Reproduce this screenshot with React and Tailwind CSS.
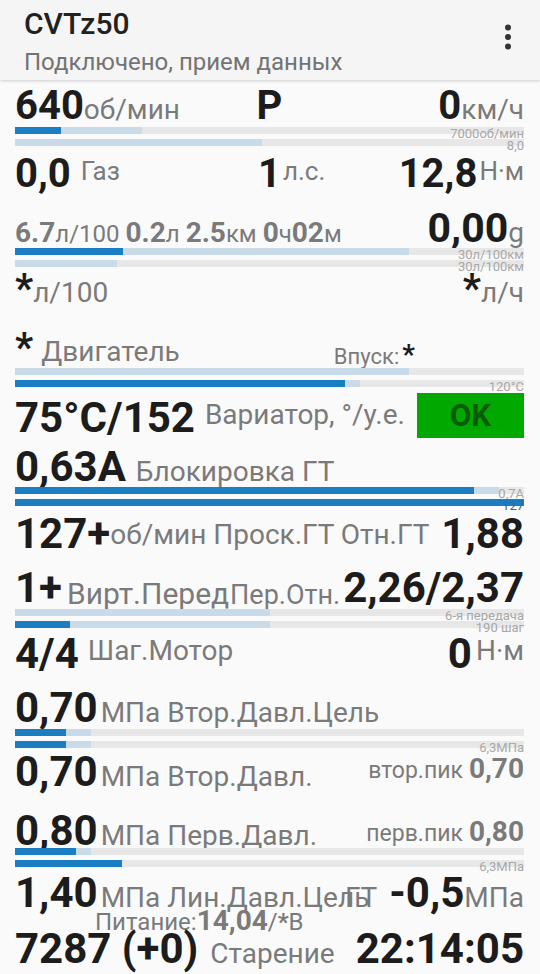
import React from "react";

const VAL = "font-bold text-[#1c1c1c]";
const GR = "text-[#7a7a7a]";
const CELL = "col-start-1 row-start-1";

function Bar({ p = 0, s = 0, label, labelCls = "text-[#a8a8a8]" }) {
  return (
    <div className="relative h-[7px] bg-[#e7e7e7]">
      {s > 0 && <div className="absolute inset-y-0 left-0 bg-[#c9dbe9]" style={{ width: s }} />}
      {p > 0 && <div className="absolute inset-y-0 left-0 bg-[#1b7dc2]" style={{ width: p }} />}
      {label && (
        <span className={`absolute right-0 top-0 text-[13px] leading-[13px] whitespace-nowrap ${labelCls}`}>
          {label}
        </span>
      )}
    </div>
  );
}

function Bars({ a, b, className = "" }) {
  return (
    <div className={`flex flex-col gap-[5px] h-[19px] ${className}`}>
      <Bar {...a} />
      <Bar {...b} />
    </div>
  );
}

function Dots() {
  return (
    <svg width="8" height="26" viewBox="0 0 8 26" className="fill-[#333]">
      <circle cx="4" cy="3.5" r="3" />
      <circle cx="4" cy="13" r="3" />
      <circle cx="4" cy="22.5" r="3" />
    </svg>
  );
}

export default function App() {
  return (
    <div className="w-[540px] h-[974px] overflow-hidden bg-[#fafafa] font-['Roboto','Noto_Sans',sans-serif] whitespace-nowrap">
      {/* Header */}
      <div className="relative h-[80px] bg-[#f5f5f5] shadow-[0_1px_3px_rgba(0,0,0,0.18)] flex items-start justify-between pl-[24px] pr-[28px]">
        <div className="flex flex-col">
          <div className="mt-[9px] text-[30px] leading-[30px] font-medium text-[#212121]">CVTz50</div>
          <div className="mt-[11px] text-[24px] leading-[24px] text-[#737373]">Подключено, прием данных</div>
        </div>
        <div className="mt-[24px]">
          <Dots />
        </div>
      </div>

      <div className="pl-[15px] pr-[16px]">
        {/* R1 */}
        <div className="grid h-[41px] mt-[6px] leading-none">
          <div className={`${CELL} flex items-baseline`}>
            <span className={`text-[40px] ${VAL}`}>640</span>
            <span className={`text-[28px] ${GR}`}>об/мин</span>
          </div>
          <div className={`${CELL} justify-self-center text-[40px] ${VAL}`}>P</div>
          <div className={`${CELL} justify-self-end flex items-baseline`}>
            <span className={`text-[40px] ${VAL}`}>0</span>
            <span className={`text-[28px] ${GR}`}>км/ч</span>
          </div>
        </div>
        <Bars a={{ p: 46, s: 127, label: "7000об/мин" }} b={{ s: 247, label: "8,0" }} />

        {/* R2 */}
        <div className="grid h-[42px] mt-[8px] leading-none">
          <div className={`${CELL} flex items-start`}>
            <span className={`text-[40px] ${VAL}`}>0,0</span>
            <span className={`text-[26px] ml-[10px] mt-[4px] ${GR}`}>Газ</span>
          </div>
          <div className={`${CELL} justify-self-start ml-[243px] flex items-start`}>
            <span className={`text-[40px] ${VAL}`}>1</span>
            <span className={`text-[26px] ml-[2px] mt-[4px] ${GR}`}>л.с.</span>
          </div>
          <div className={`${CELL} justify-self-end flex items-start`}>
            <span className={`text-[40px] ${VAL}`}>12,8</span>
            <span className={`text-[26px] ml-[2px] mt-[4px] ${GR}`}>Н·м</span>
          </div>
        </div>

        {/* R3 */}
        <div className="grid h-[40px] mt-[12px] leading-none">
          <div className={`${CELL} self-start mt-[11px] flex items-baseline text-[#7a7a7a]`}>
            <span className="text-[28px] font-bold">6.7</span>
            <span className="text-[24px]">л/100</span>
            <span className="text-[28px] font-bold ml-[6px]">0.2</span>
            <span className="text-[24px]">л</span>
            <span className="text-[28px] font-bold ml-[6px]">2.5</span>
            <span className="text-[24px]">км</span>
            <span className="text-[28px] font-bold ml-[6px]">0</span>
            <span className="text-[24px]">ч</span>
            <span className="text-[28px] font-bold">02</span>
            <span className="text-[24px]">м</span>
          </div>
          <div className={`${CELL} justify-self-end flex items-baseline`}>
            <span className={`text-[41px] ${VAL}`}>0,00</span>
            <span className={`text-[28px] ${GR}`}>g</span>
          </div>
        </div>
        <Bars a={{ p: 108, s: 394, label: "30л/100км" }} b={{ s: 102, label: "30л/100км" }} />

        {/* R4 */}
        <div className="grid h-[40px] mt-[2px] leading-none">
          <div className={`${CELL} flex items-baseline`}>
            <span className={`text-[40px] ${VAL}`}>*</span>
            <span className={`text-[28px] ${GR}`}>л/100</span>
          </div>
          <div className={`${CELL} justify-self-end flex items-baseline`}>
            <span className={`text-[40px] ${VAL}`}>*</span>
            <span className={`text-[28px] ${GR}`}>л/ч</span>
          </div>
        </div>

        {/* R5 */}
        <div className="grid h-[40px] mt-[19px] leading-none">
          <div className={`${CELL} flex items-baseline`}>
            <span className={`text-[40px] ${VAL}`}>*</span>
            <span className={`text-[28px] ml-[8px] ${GR}`}>Двигатель</span>
          </div>
          <div className={`${CELL} justify-self-end mr-[109px] flex items-baseline self-start mt-[13px]`}>
            <span className={`text-[22px] ${GR}`}>Впуск:</span>
            <span className={`text-[28px] ml-[3px] ${VAL}`}>*</span>
          </div>
        </div>
        <Bars a={{ s: 394 }} b={{ p: 330, s: 345, label: "120°C" }} />

        {/* R6 */}
        <div className="grid h-[42px] mt-[10px] leading-none">
          <div className={`${CELL} flex items-start`}>
            <span className={`text-[42px] ${VAL}`}>75°C/152</span>
            <span className={`text-[28px] ml-[10px] mt-[4px] ${GR}`}>Вариатор, °/у.е.</span>
          </div>
          <div className={`${CELL} justify-self-end self-start mt-[-4px] w-[107px] h-[45px] bg-[#00a800] flex items-center justify-center`}>
            <span className="text-[31px] font-bold text-[#0a5c0a]">OK</span>
          </div>
        </div>

        {/* R7 */}
        <div className="grid h-[41px] mt-[7px] leading-none">
          <div className={`${CELL} flex items-baseline`}>
            <span className={`text-[42px] ${VAL}`}>0,63A</span>
            <span className={`text-[28px] ml-[10px] ${GR}`}>Блокировка ГТ</span>
          </div>
        </div>
        <Bars
          a={{ p: 459, s: 484, label: "0,7A" }}
          b={{ p: 509, label: "127", labelCls: "text-[#2a6ea3]" }}
        />

        {/* R8 */}
        <div className="grid h-[42px] mt-[7px] leading-none">
          <div className={`${CELL} flex items-start`}>
            <span className={`text-[42px] ${VAL}`}>127+</span>
            <span className={`text-[28px] mt-[8px] ${GR}`}>об/мин Проск.ГТ</span>
          </div>
          <div className={`${CELL} justify-self-end flex items-start`}>
            <span className={`text-[28px] mt-[8px] ${GR}`}>Отн.ГТ</span>
            <span className={`text-[42px] ml-[12px] ${VAL}`}>1,88</span>
          </div>
        </div>

        {/* R9 */}
        <div className="grid h-[42px] mt-[12px] leading-none">
          <div className={`${CELL} flex items-start`}>
            <span className={`text-[42px] ${VAL}`}>1+</span>
            <span className={`text-[30px] ml-[5px] mt-[12px] ${GR}`}>Вирт.Перед</span>
          </div>
          <div className={`${CELL} justify-self-end flex items-start`}>
            <span className={`text-[27px] mt-[15px] ${GR}`}>Пер.Отн.</span>
            <span className={`text-[42px] ml-[3px] ${VAL}`}>2,26/2,37</span>
          </div>
        </div>
        <Bars a={{ s: 255, label: "6-я передача" }} b={{ p: 55, s: 255, label: "190 шаг" }} />

        {/* R10 */}
        <div className="grid h-[42px] mt-[5px] leading-none">
          <div className={`${CELL} flex items-start`}>
            <span className={`text-[42px] ${VAL}`}>4/4</span>
            <span className={`text-[28px] ml-[9px] mt-[4px] ${GR}`}>Шаг.Мотор</span>
          </div>
          <div className={`${CELL} justify-self-end flex items-start`}>
            <span className={`text-[42px] ${VAL}`}>0</span>
            <span className={`text-[28px] ml-[4px] mt-[4px] ${GR}`}>Н·м</span>
          </div>
        </div>

        {/* R11 */}
        <div className="grid h-[42px] mt-[12px] leading-none">
          <div className={`${CELL} flex items-baseline`}>
            <span className={`text-[42px] ${VAL}`}>0,70</span>
            <span className={`text-[28px] ml-[3px] ${GR}`}>МПа Втор.Давл.Цель</span>
          </div>
        </div>
        <Bars a={{ p: 51, s: 76 }} b={{ p: 51, s: 76, label: "6,3МПа" }} />

        {/* R12 */}
        <div className="grid h-[42px] mt-[3px] leading-none">
          <div className={`${CELL} flex items-baseline`}>
            <span className={`text-[42px] ${VAL}`}>0,70</span>
            <span className={`text-[28px] ml-[3px] ${GR}`}>МПа Втор.Давл.</span>
          </div>
          <div className={`${CELL} justify-self-end self-start mt-[4px] flex items-baseline text-[#7a7a7a]`}>
            <span className="text-[23px]">втор.пик</span>
            <span className="text-[28px] font-bold ml-[6px]">0,70</span>
          </div>
        </div>

        {/* R13 */}
        <div className="grid h-[38px] mt-[17px] leading-none">
          <div className={`${CELL} flex items-baseline`}>
            <span className={`text-[42px] ${VAL}`}>0,80</span>
            <span className={`text-[28px] ml-[3px] ${GR}`}>МПа Перв.Давл.</span>
          </div>
          <div className={`${CELL} justify-self-end self-start mt-[8px] flex items-baseline text-[#7a7a7a]`}>
            <span className="text-[23px]">перв.пик</span>
            <span className="text-[28px] font-bold ml-[6px]">0,80</span>
          </div>
        </div>
        <Bars a={{ p: 61, s: 76 }} b={{ p: 107, label: "6,3МПа" }} />

        {/* R14 */}
        <div className="grid h-[35px] mt-[5px] leading-none">
          <div className={`${CELL} flex items-baseline`}>
            <span className={`text-[42px] ${VAL}`}>1,40</span>
            <span className={`text-[28px] ml-[3px] ${GR}`}>МПа Лин.Давл.Цель</span>
          </div>
          <div className={`${CELL} justify-self-end flex items-baseline`}>
            <span className={`text-[28px] ${GR}`}>ГТ</span>
            <span className={`text-[42px] ml-[12px] ${VAL}`}>-0,5</span>
            <span className={`text-[28px] ${GR}`}>МПа</span>
          </div>
        </div>

        {/* Питание */}
        <div className="h-[21px] leading-none ml-[80px] flex items-baseline text-[#7a7a7a]">
          <span className="text-[24px]">Питание:</span>
          <span className="text-[28px] font-bold">14,04</span>
          <span className="text-[24px]">/</span>
          <span className="text-[24px] font-bold">*</span>
          <span className="text-[24px]">В</span>
        </div>

        {/* R16 */}
        <div className="grid h-[46px] leading-none">
          <div className={`${CELL} flex items-baseline`}>
            <span className={`text-[42px] ${VAL}`}>7287 (+0)</span>
            <span className={`text-[28px] ml-[12px] ${GR}`}>Старение</span>
          </div>
          <div className={`${CELL} justify-self-end flex items-baseline`}>
            <span className={`text-[42px] ${VAL}`}>22:14:05</span>
          </div>
        </div>
      </div>
    </div>
  );
}
